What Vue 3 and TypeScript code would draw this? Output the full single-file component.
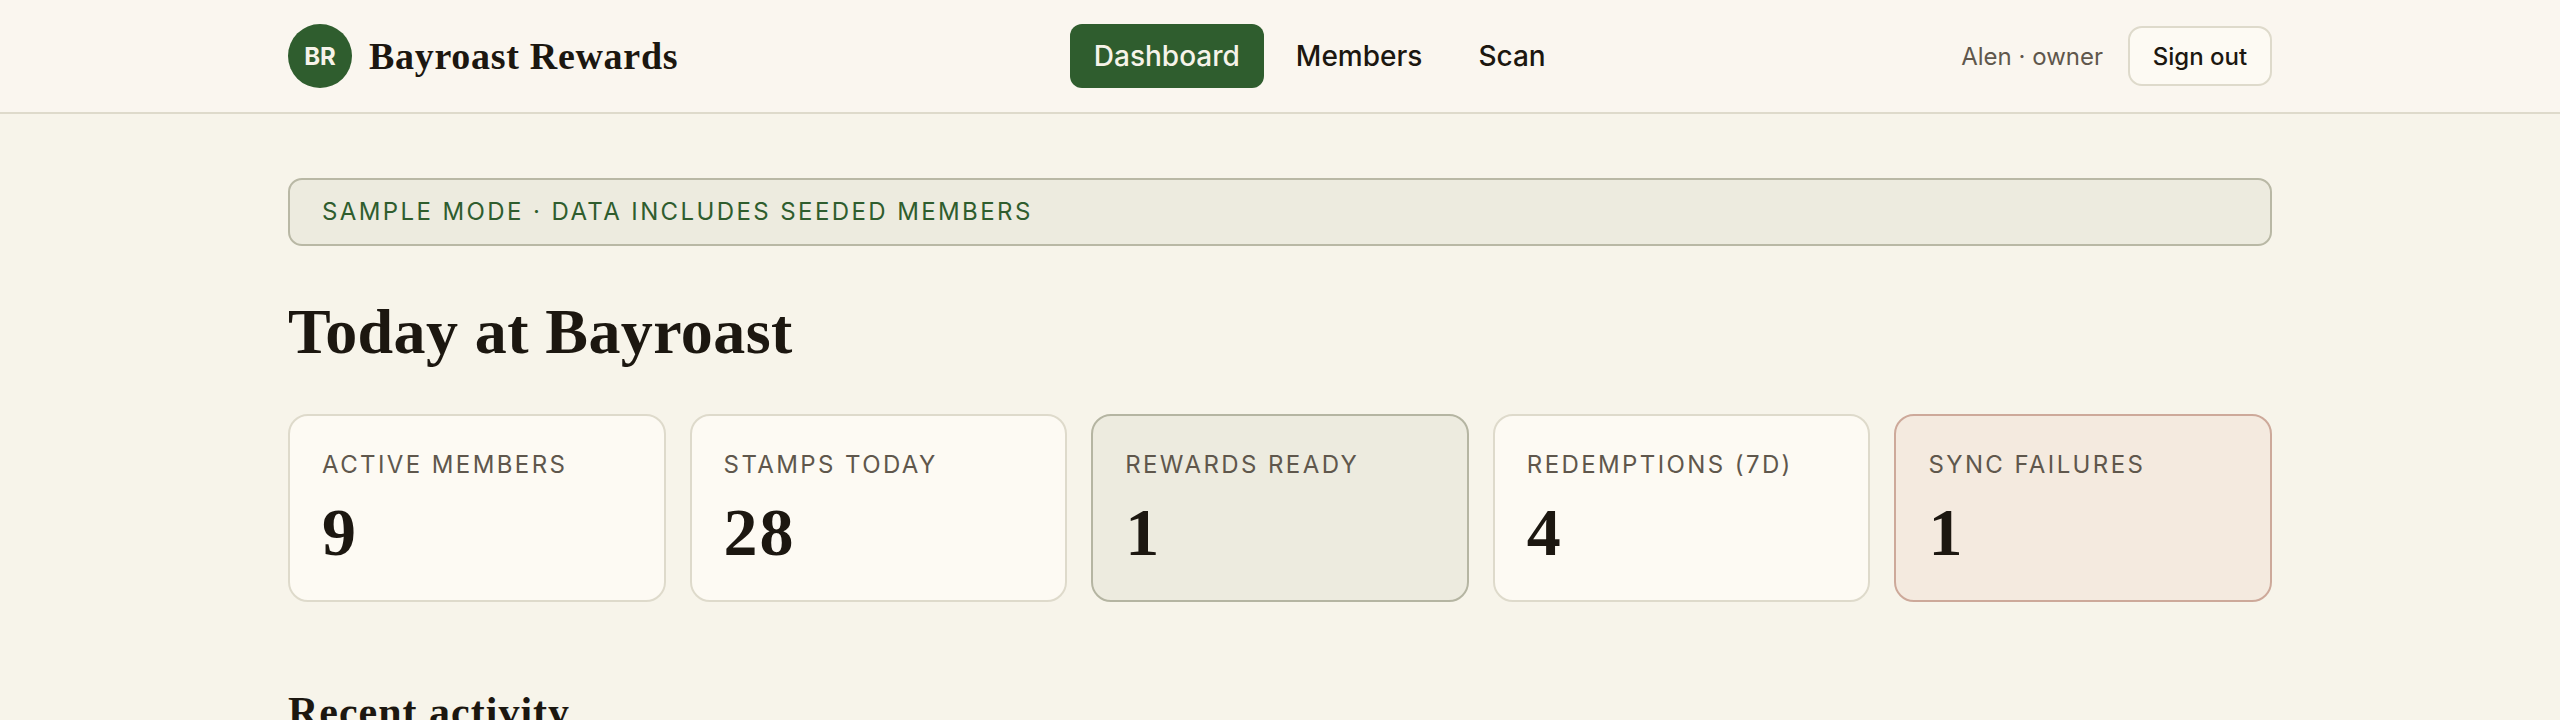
<script setup lang="ts">
interface Stat { label: string; value: number; tone?: string }
const stats: Stat[] = [
  { label: 'Active members', value: 9 },
  { label: 'Stamps today', value: 28 },
  { label: 'Rewards ready', value: 1, tone: 'ready' },
  { label: 'Redemptions (7d)', value: 4 },
  { label: 'Sync failures', value: 1, tone: 'fail' },
]
const nav = ['Dashboard', 'Members', 'Scan']
</script>

<template>
  <div class="page">
    <header class="topbar">
      <div class="inner bar">
        <div class="brand">
          <span class="mark">BR</span>
          <span class="name">Bayroast Rewards</span>
        </div>
        <nav class="nav">
          <a v-for="(n, i) in nav" :key="n" class="link" :class="{ on: i === 0 }">{{ n }}</a>
        </nav>
        <div class="user">
          <span class="who">Alen · owner</span>
          <button class="out">Sign out</button>
        </div>
      </div>
    </header>
    <main class="inner main">
      <div class="banner">Sample mode · data includes seeded members</div>
      <h1 class="title">Today at Bayroast</h1>
      <section class="stats">
        <div v-for="s in stats" :key="s.label" class="card" :class="s.tone">
          <div class="label">{{ s.label }}</div>
          <div class="value">{{ s.value }}</div>
        </div>
      </section>
      <h2 class="sub">Recent activity</h2>
    </main>
  </div>
</template>

<style>
html, body { margin: 0; height: 720px; overflow: hidden; background: #f7f4ea; }
</style>

<style scoped>
.page { font-family: Inter, "Liberation Sans", sans-serif; color: #1c1710; min-height: 720px; background: #f7f4ea; }
.topbar { background: #faf6ef; border-bottom: 2px solid #dedacb; }
.inner { width: 1984px; margin: 0 auto; }
.bar { display: flex; align-items: center; justify-content: space-between; height: 112px; }
.brand { display: flex; align-items: center; gap: 17px; }
.mark { width: 64px; height: 64px; border-radius: 50%; background: #2f5d2e; color: #f6f3e9; display: flex; align-items: center; justify-content: center; font-size: 24px; font-weight: 700; }
.name { font-family: "Liberation Serif", serif; font-weight: 700; font-size: 38px; letter-spacing: 0.7px; }
.nav { display: flex; gap: 8px; }
.link { height: 64px; padding: 0 24px; border-radius: 12px; display: flex; align-items: center; font-size: 28px; font-weight: 500; }
.link.on { background: #2f5d2e; color: #f6f3e9; }
.user { display: flex; align-items: center; gap: 25px; }
.who { font-size: 24px; color: #5f574c; }
.out { height: 60px; width: 144px; padding: 0; border: 2px solid #dedacb; border-radius: 14px; background: #fdfaf3; color: #1c1710; font: 500 24px Inter, sans-serif; }
.main { padding-top: 64px; }
.banner { height: 68px; box-sizing: border-box; padding: 0 32px 2px; display: flex; align-items: center; background: #edebdf; border: 2px solid #b9b8a5; border-radius: 14px; color: #2f5d2e; font-size: 24px; letter-spacing: 2.4px; text-transform: uppercase; }
.title { margin: 50px 0 46px; font-family: "Liberation Serif", serif; font-weight: 700; font-size: 64px; line-height: 72px; letter-spacing: 0.4px; }
.stats { display: grid; grid-template-columns: repeat(5, 1fr); gap: 24px; }
.card { height: 188px; box-sizing: border-box; padding: 34px 32px 0; background: #fdfaf3; border: 2px solid #dedacb; border-radius: 20px; }
.card.ready { background: #edebdf; border-color: #b5b5a2; }
.card.fail { background: #f4eadf; border-color: #cda99a; }
.label { font-size: 24px; line-height: 30px; letter-spacing: 2.4px; text-transform: uppercase; color: #5f574c; }
.value { margin-top: 12px; font-family: "Liberation Serif", serif; font-weight: 700; font-size: 68px; line-height: 80px; letter-spacing: 2px; }
.sub { margin: 86px 0 0; font-family: "Liberation Serif", serif; font-weight: 700; font-size: 42px; line-height: 48px; letter-spacing: 1px; }
</style>
